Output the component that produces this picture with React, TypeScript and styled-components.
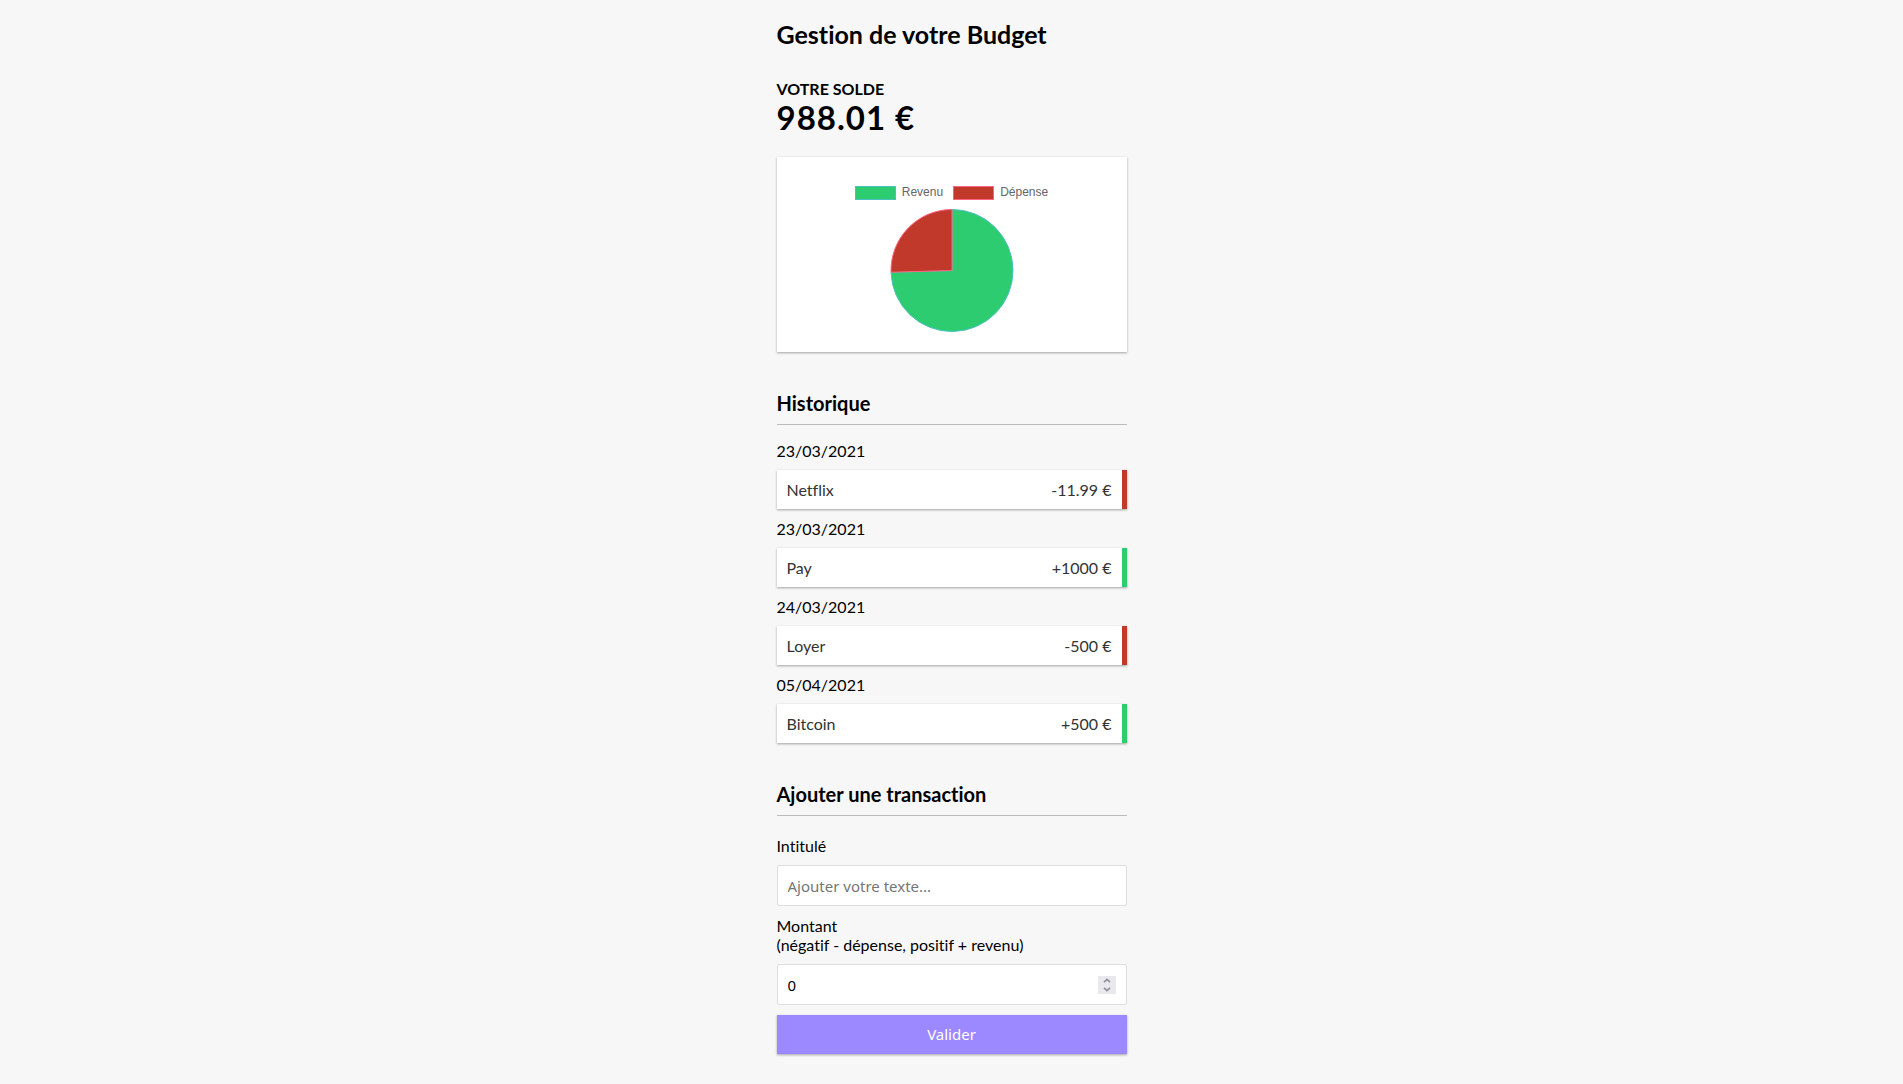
import React, { FormEvent, useState } from "react";
import styled, { createGlobalStyle } from "styled-components";

const INCOME = "#2ecc71";
const EXPENSE = "#c0392b";
const INCOME_LINE = "#4bc0c0";
const EXPENSE_LINE = "#ff6384";

type Transaction = { id: number; date: string; label: string; amount: number };

const initialTransactions: Transaction[] = [
  { id: 1, date: "23/03/2021", label: "Netflix", amount: -11.99 },
  { id: 2, date: "23/03/2021", label: "Pay", amount: 1000 },
  { id: 3, date: "24/03/2021", label: "Loyer", amount: -500 },
  { id: 4, date: "05/04/2021", label: "Bitcoin", amount: 500 },
];

const GlobalStyle = createGlobalStyle`
  *, *::before, *::after { box-sizing: border-box; }
  body {
    margin: 0;
    background: #f7f7f7;
    color: #000;
    font-family: Lato, sans-serif;
    font-size: 16px;
    line-height: 19px;
    font-variant-ligatures: none;
  }
`;

const Page = styled.main`
  width: 100%;
  max-width: 350px;
  margin: 0 auto;
  padding: 20px 0 30px;
`;

const Title = styled.h1`
  margin: 0 0 30px;
  font-size: 25px;
  line-height: 29px;
  font-weight: 700;
`;

const BalanceLabel = styled.h2`
  margin: 0;
  font-size: 16px;
  line-height: 19px;
  font-weight: 700;
  text-transform: uppercase;
`;

const BalanceAmount = styled.p`
  margin: 0;
  font-size: 33px;
  line-height: 39px;
  font-weight: 700;
  letter-spacing: 1px;
`;

const ChartCard = styled.section`
  display: flex;
  flex-direction: column;
  align-items: center;
  gap: 8px;
  margin-top: 20px;
  padding: 29px 20px 19px;
  background: #fff;
  box-shadow: 0 1px 3px rgba(0, 0, 0, 0.12), 0 1px 2px rgba(0, 0, 0, 0.24);
`;

const Legend = styled.ul`
  display: flex;
  gap: 10px;
  margin: 0;
  padding: 0;
  list-style: none;
  color: #666;
  font-family: "Liberation Sans", Arial, sans-serif;
  font-size: 12px;
  line-height: 12px;
`;

const LegendItem = styled.li`
  display: flex;
  gap: 6px;
`;

const Swatch = styled.span<{ $fill: string; $line: string }>`
  width: 41px;
  height: 14px;
  border: 1px solid ${(p) => p.$line};
  background: ${(p) => p.$fill};
`;

const Pie = styled.svg`
  display: block;
  width: 125px;
  height: 125px;
`;

const SectionTitle = styled.h3`
  margin: 40px 0 0;
  padding-bottom: 10px;
  border-bottom: 1px solid #bbb;
  font-size: 20px;
  line-height: 22px;
  font-weight: 700;
`;

const History = styled.ul`
  display: flex;
  flex-direction: column;
  gap: 10px;
  margin: 16px 0 0;
  padding: 0;
  list-style: none;
`;

const Entry = styled.li`
  display: flex;
  flex-direction: column;
  gap: 10px;
`;

const EntryRow = styled.div<{ $color: string }>`
  display: flex;
  justify-content: space-between;
  padding: 10px;
  border-right: 5px solid ${(p) => p.$color};
  background: #fff;
  color: #333;
  box-shadow: 0 1px 3px rgba(0, 0, 0, 0.12), 0 1px 2px rgba(0, 0, 0, 0.24);
`;

const Form = styled.form`
  display: flex;
  flex-direction: column;
  gap: 10px;
  margin-top: 20px;
`;

const Field = styled.div`
  display: flex;
  flex-direction: column;
  gap: 10px;
`;

const InputBox = styled.div`
  display: flex;
  align-items: center;
  padding: 0 10px 0 0;
  border: 1px solid #dedede;
  border-radius: 2px;
  background: #fff;
`;

const Input = styled.input`
  flex: 1;
  min-width: 0;
  height: 39px;
  padding: 10px;
  border: 0;
  background: transparent;
  color: #000;
  font-family: "Noto Sans", sans-serif;
  font-size: 15px;
  line-height: 19px;
  appearance: textfield;

  &::placeholder { color: #757575; }
  &::-webkit-inner-spin-button { appearance: none; margin: 0; }
  &:focus { outline: none; }
`;

const Stepper = styled.div`
  display: flex;
  flex-direction: column;
  width: 18px;
  background: #e9e9ed;
`;

const StepButton = styled.button`
  display: flex;
  align-items: center;
  justify-content: center;
  height: 9px;
  padding: 0;
  border: 0;
  background: transparent;
  color: #8f8f9d;
`;

const Submit = styled.button`
  padding: 10px;
  border: 0;
  background: #9c88ff;
  color: #fff;
  font-family: "Noto Sans", sans-serif;
  font-size: 15px;
  line-height: 19px;
  cursor: pointer;
  box-shadow: 0 1px 3px rgba(0, 0, 0, 0.12), 0 1px 2px rgba(0, 0, 0, 0.24);
`;

function PieChart({ income, expense }: { income: number; expense: number }) {
  const cx = 63;
  const cy = 62.5;
  const r = 61;
  const angle = (income / (income + expense || 1)) * Math.PI * 2;
  const x = cx + r * Math.sin(angle);
  const y = cy - r * Math.cos(angle);
  const large = angle > Math.PI ? 1 : 0;
  return (
    <Pie viewBox="0 0 125 125" role="img" aria-label="Revenu et dépense">
      <path
        d={`M${cx} ${cy}V${cy - r}A${r} ${r} 0 ${large} 1 ${x} ${y}Z`}
        fill={INCOME}
        stroke={INCOME_LINE}
      />
      <path
        d={`M${cx} ${cy}L${x} ${y}A${r} ${r} 0 ${1 - large} 1 ${cx} ${cy - r}Z`}
        fill={EXPENSE}
        stroke={EXPENSE_LINE}
      />
    </Pie>
  );
}

export default function App() {
  const [transactions, setTransactions] = useState(initialTransactions);
  const [label, setLabel] = useState("");
  const [amount, setAmount] = useState("0");

  const income = transactions.filter((t) => t.amount > 0).reduce((s, t) => s + t.amount, 0);
  const expense = -transactions.filter((t) => t.amount < 0).reduce((s, t) => s + t.amount, 0);

  const step = (delta: number) => setAmount(String((Number(amount) || 0) + delta));

  const submit = (event: FormEvent) => {
    event.preventDefault();
    if (!label.trim() || !Number(amount)) return;
    setTransactions([
      ...transactions,
      {
        id: Date.now(),
        date: new Date().toLocaleDateString("fr-FR"),
        label,
        amount: Number(amount),
      },
    ]);
    setLabel("");
    setAmount("0");
  };

  return (
    <>
      <GlobalStyle />
      <Page>
        <Title>Gestion de votre Budget</Title>
        <BalanceLabel>Votre solde</BalanceLabel>
        <BalanceAmount>{(income - expense).toFixed(2)} €</BalanceAmount>

        <ChartCard>
          <Legend>
            <LegendItem>
              <Swatch $fill={INCOME} $line={INCOME_LINE} />
              Revenu
            </LegendItem>
            <LegendItem>
              <Swatch $fill={EXPENSE} $line={EXPENSE_LINE} />
              Dépense
            </LegendItem>
          </Legend>
          <PieChart income={income} expense={expense} />
        </ChartCard>

        <SectionTitle>Historique</SectionTitle>
        <History>
          {transactions.map((t) => (
            <Entry key={t.id}>
              <time>{t.date}</time>
              <EntryRow $color={t.amount < 0 ? EXPENSE : INCOME}>
                <span>{t.label}</span>
                <span>
                  {t.amount < 0 ? "-" : "+"}
                  {Math.abs(t.amount)} €
                </span>
              </EntryRow>
            </Entry>
          ))}
        </History>

        <SectionTitle>Ajouter une transaction</SectionTitle>
        <Form onSubmit={submit}>
          <Field>
            <label htmlFor="label">Intitulé</label>
            <InputBox>
              <Input
                id="label"
                type="text"
                placeholder="Ajouter votre texte..."
                value={label}
                onChange={(e) => setLabel(e.target.value)}
              />
            </InputBox>
          </Field>
          <Field>
            <label htmlFor="amount">
              Montant
              <br />
              (négatif - dépense, positif + revenu)
            </label>
            <InputBox>
              <Input
                id="amount"
                type="number"
                step="any"
                value={amount}
                onChange={(e) => setAmount(e.target.value)}
              />
              <Stepper>
                <StepButton type="button" aria-label="Augmenter" onClick={() => step(1)}>
                  <svg width="8" height="5" viewBox="0 0 8 5" fill="none" stroke="currentColor" strokeWidth="1.6">
                    <path d="M1 4.2L4 1.3L7 4.2" />
                  </svg>
                </StepButton>
                <StepButton type="button" aria-label="Diminuer" onClick={() => step(-1)}>
                  <svg width="8" height="5" viewBox="0 0 8 5" fill="none" stroke="currentColor" strokeWidth="1.6">
                    <path d="M1 0.8L4 3.7L7 0.8" />
                  </svg>
                </StepButton>
              </Stepper>
            </InputBox>
          </Field>
          <Submit type="submit">Valider</Submit>
        </Form>
      </Page>
    </>
  );
}
